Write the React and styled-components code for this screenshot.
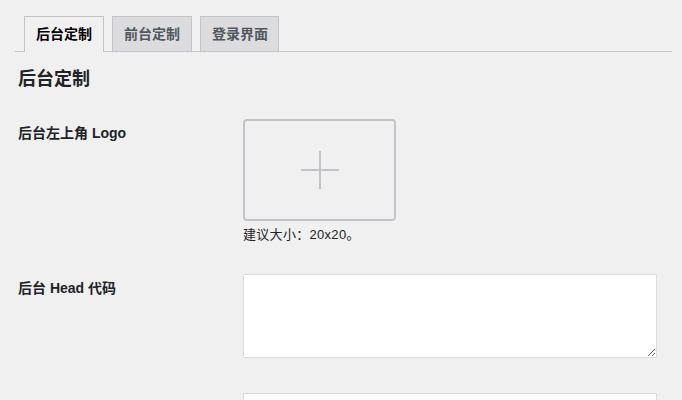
import React from "react"
import styled, { createGlobalStyle } from "styled-components"

const GlobalStyle = createGlobalStyle`
  html, body {
    margin: 0;
    padding: 0;
    background: #f0f0f1;
  }
  body {
    font-family: "Liberation Sans", "Noto Sans CJK SC", sans-serif;
    color: #1d2327;
  }
`

const tabs = ["后台定制", "前台定制", "登录界面"]

const App = () => {
  return (
    <StyledPage>
      <GlobalStyle />
      <TabBar>
        {tabs.map((t, i) => (
          <Tab key={t} $active={i === 0}>
            {t}
          </Tab>
        ))}
      </TabBar>
      <Heading>后台定制</Heading>
      <FormRow>
        <Label>后台左上角 Logo</Label>
        <Field>
          <UploadBox>
            <svg width="40" height="40" viewBox="0 0 40 40">
              <path d="M20 1v38M1 20h38" stroke="#c3c4c7" strokeWidth="2" />
            </svg>
          </UploadBox>
          <Hint>建议大小：20x20。</Hint>
        </Field>
      </FormRow>
      <FormRow>
        <Label>后台 Head 代码</Label>
        <Field>
          <TextArea />
        </Field>
      </FormRow>
      <FormRow>
        <Label>后台 Footer 代码</Label>
        <Field>
          <TextArea />
        </Field>
      </FormRow>
    </StyledPage>
  )
}

const StyledPage = styled.div`
  padding: 16px 10px 0 15px;
  height: 400px;
  box-sizing: border-box;
  overflow: hidden;
`

const TabBar = styled.div`
  display: flex;
  gap: 8px;
  padding-left: 9px;
  border-bottom: 1px solid #c3c4c7;
`

const Tab = styled.div`
  box-sizing: border-box;
  padding: 5px 11px 5px 11px;
  font-size: 14px;
  line-height: 24px;
  font-weight: 600;
  border: 1px solid #c3c4c7;
  border-bottom: none;
  margin-bottom: ${(p) => (p.$active ? "-1px" : "0")};
  padding-bottom: ${(p) => (p.$active ? "6px" : "5px")};
  background: ${(p) => (p.$active ? "#f0f0f1" : "#dcdcde")};
  color: ${(p) => (p.$active ? "#000" : "#50575e")};
  &:last-child {
    padding-right: 10px;
  }
`

const Heading = styled.h2`
  margin: 15px 0 13px 3px;
  font-size: 18px;
  line-height: 24px;
  font-weight: 600;
`

const FormRow = styled.div`
  display: grid;
  grid-template-columns: 225px 414px;
  padding-left: 3px;
`

const Label = styled.div`
  padding: 20px 0;
  font-size: 14px;
  line-height: 18px;
  font-weight: 600;
`

const Field = styled.div`
  padding: 15px 0;
`

const UploadBox = styled.div`
  box-sizing: border-box;
  width: 153px;
  height: 102px;
  border: 2px solid #c3c4c7;
  border-radius: 4px;
  display: flex;
  align-items: center;
  justify-content: center;
`

const Hint = styled.div`
  margin-top: 5px;
  font-size: 13px;
  line-height: 18px;
  letter-spacing: 0.3px;
  color: #1d2327;
`

const TextArea = styled.textarea`
  display: block;
  box-sizing: border-box;
  width: 414px;
  height: 84px;
  margin-bottom: 5px;
  border: 1px solid #dcdcde;
  background: #fff;
  border-radius: 0;
`

export default App
